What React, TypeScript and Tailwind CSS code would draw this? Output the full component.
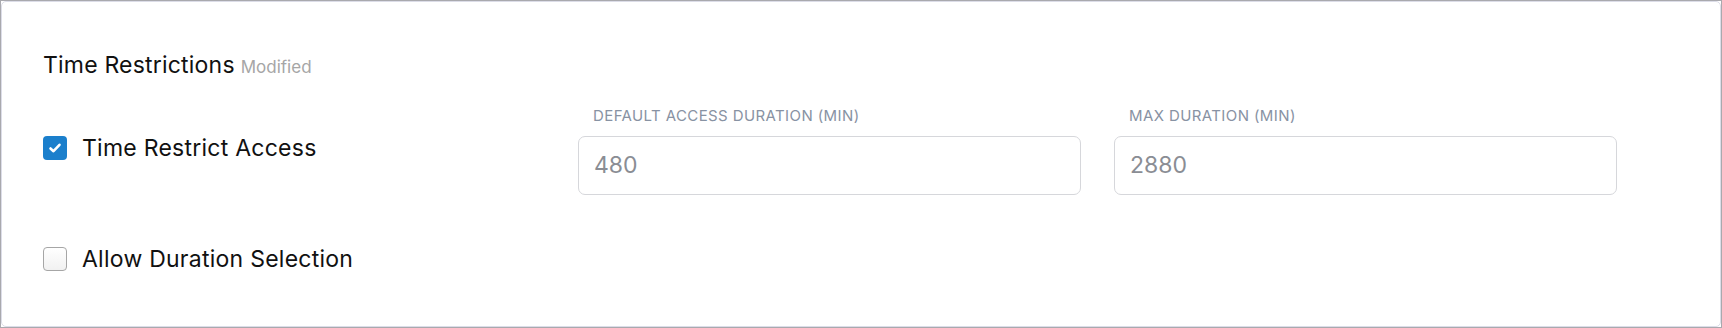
import React from "react";

const font = { fontFamily: "Inter, 'Noto Sans', sans-serif" };

const Check = ({ checked, label }: { checked: boolean; label: string }) => (
  <label className="flex items-center gap-[15px] cursor-pointer">
    {checked ? (
      <span className="flex h-[24px] w-[24px] items-center justify-center rounded-[4px] bg-[#1b7fcc]">
        <svg width="14" height="14" viewBox="0 0 14 14" fill="none">
          <polyline points="2.5,7.5 5.5,10.2 11.5,3.8" stroke="#fff" strokeWidth="2.6" strokeLinecap="round" strokeLinejoin="round" />
        </svg>
      </span>
    ) : (
      <span className="h-[24px] w-[24px] rounded-[4px] border border-[#a6a6a6] bg-gradient-to-b from-white to-[#f1f1f1]" />
    )}
    <span className="text-[23px] leading-[28px] tracking-[0.25px] text-[#111]">{label}</span>
  </label>
);

const Field = ({ label, value }: { label: string; value: string }) => (
  <div className="flex w-[503px] flex-col">
    <span className="pl-[15px] text-[15px] leading-[20px] tracking-[0.4px] text-[#8892a3]">{label}</span>
    <div className="mt-[10px] flex h-[59px] items-center rounded-[7px] border border-[#d6d7db] bg-white px-[15px]">
      <span className="text-[23px] text-[#8a8d94]">{value}</span>
    </div>
  </div>
);

export default function App() {
  return (
    <div className="h-[328px] w-full border border-[#a9a9ae] bg-white" style={font}>
      <div className="h-full rounded-[5px] border border-[#dcdde8] px-[41px]">
        <div className="mt-[47px] flex items-baseline gap-[6px]">
          <span className="text-[23px] leading-[32px] tracking-[0.2px] text-[#111]">Time Restrictions</span>
          <span className="text-[17px] text-[#a6a6a6]">Modified</span>
        </div>
        <div className="mt-[25px] flex">
          <div className="flex w-[535px] flex-col pt-[28px]">
            <Check checked label="Time Restrict Access" />
            <div className="mt-[83px]">
              <Check checked={false} label="Allow Duration Selection" />
            </div>
          </div>
          <div className="flex gap-[33px]">
            <Field label="DEFAULT ACCESS DURATION (MIN)" value="480" />
            <Field label="MAX DURATION (MIN)" value="2880" />
          </div>
        </div>
      </div>
    </div>
  );
}
